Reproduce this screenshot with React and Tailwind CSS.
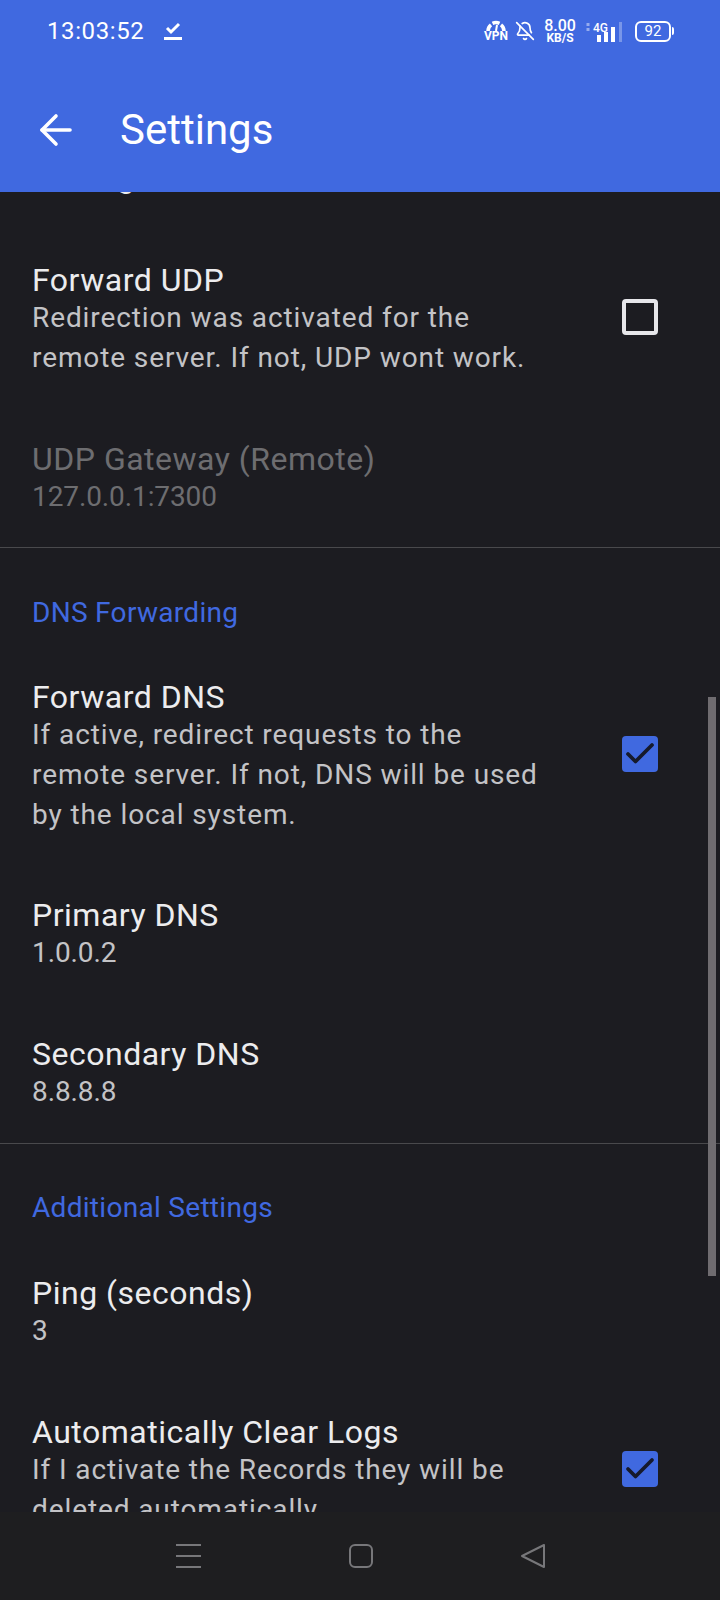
import { ArrowLeft, BellOff, Check } from 'lucide-react';

const FONT = "font-['Roboto',sans-serif]";

function Box({ on }) {
  if (on) {
    return (
      <div className="w-9 h-9 mb-[7px] rounded bg-[#4069e0] flex items-center justify-center shrink-0">
        <Check size={36} strokeWidth={2.5} className="text-[#161a2c]" />
      </div>
    );
  }
  return <div className="w-9 h-9 mb-[7px] rounded border-4 border-[#e6e6ea] shrink-0" />;
}

function Row({ title, sub, on, dim, num, className = '' }) {
  return (
    <div className={`flex items-center pl-8 pr-[62px] ${className}`}>
      <div className="flex-1 min-w-0">
        <div className={`text-[32px] leading-[36px] tracking-[0.5px] ${dim ? 'text-[#6d6d70]' : 'text-[#ececee]'}`}>{title}</div>
        <div className={`text-[28px] leading-[40px] ${num ? 'tracking-[-0.1px]' : 'tracking-[0.9px]'} ${dim ? 'text-[#6d6d70]' : 'text-[#c3c3c6]'}`}>{sub}</div>
      </div>
      {on !== undefined && <Box on={on} />}
    </div>
  );
}

function Section({ children, className = '' }) {
  return <div className={`pl-8 text-[28px] leading-[36px] tracking-[0.3px] text-[#4069e0] ${className}`}>{children}</div>;
}

function StatusIcons() {
  return (
    <div className="flex items-center text-white">
      <div className="w-[22px] flex flex-col items-center">
        <svg width="20" height="11" viewBox="0 0 20 11" fill="none" stroke="currentColor" strokeWidth="3.5">
          <path d="M2 11a8 8 0 0 1 3-6.2" />
          <path d="M6.5 3.4a8 8 0 0 1 7 0" />
          <path d="M15 4.8a8 8 0 0 1 3 6.2" />
          <path d="M11 5l-1 6" strokeWidth="2" />
        </svg>
        <span className="text-[12px] leading-[11px] font-bold">VPN</span>
      </div>
      <BellOff className="ml-2" size={20} strokeWidth={2} />
      <div className="ml-[7px] w-9 flex flex-col items-center">
        <span className="text-[16px] leading-[13px] font-medium">8.00</span>
        <span className="text-[12px] leading-[12px] font-bold">KB/S</span>
      </div>
      <div className="relative ml-[7px] w-[38px] h-6">
        <span className="absolute left-2 top-[3px] text-[12px] leading-[13px] font-medium">4G</span>
        <svg className="absolute left-0 top-0" width="38" height="24" viewBox="0 0 38 24">
          <path d="M3 4v3M3 9v3" stroke="#ffffff" strokeOpacity="0.45" strokeWidth="3" />
          <rect x="12" y="16" width="4" height="7" fill="currentColor" />
          <rect x="19" y="13" width="4" height="10" fill="currentColor" />
          <rect x="26" y="8" width="4" height="15" fill="currentColor" />
          <rect x="34" y="3" width="3" height="20" fill="#ffffff" fillOpacity="0.3" />
        </svg>
      </div>
      <div className="ml-3 w-9 h-[21px] rounded-[6px] border-2 border-white flex items-center justify-center text-[15px] leading-none">92</div>
      <div className="w-[2px] h-2 bg-white rounded-r ml-px" />
    </div>
  );
}

export default function App() {
  return (
    <div className={`w-[720px] h-[1600px] flex flex-col bg-[#1c1c21] overflow-hidden ${FONT}`}>
      <div className="h-[192px] shrink-0 bg-[#4069e0] text-white z-10">
        <div className="h-[62px] pl-[47px] pr-[46px] flex items-center justify-between">
          <div className="flex items-center">
            <span className="text-[24px] leading-none tracking-[0.6px]">13:03:52</span>
            <svg className="ml-[20px]" width="18" height="20" viewBox="0 0 18 20" fill="none" stroke="currentColor" strokeWidth="3">
              <path d="M3 7l4 4 8-8" />
              <path d="M0 17.5h18" />
            </svg>
          </div>
          <StatusIcons />
        </div>
        <div className="h-[130px] pt-[5px] flex items-center pl-8">
          <ArrowLeft size={48} strokeWidth={1.8} />
          <span className="ml-10 text-[42px] leading-none">Settings</span>
        </div>
      </div>

      <div className="relative flex-1 min-h-0 overflow-hidden">
        <div className="-mt-[35px]">
          <div className="pl-8 text-[32px] leading-[40px] tracking-[0.5px] text-[#ececee]">Settings</div>
          <Row className="mt-[65px]" title="Forward UDP" sub={<>Redirection was activated for the<br />remote server. If not, UDP wont work.</>} on={false} />
          <Row className="mt-[63px]" dim num title="UDP Gateway (Remote)" sub="127.0.0.1:7300" />
          <div className="mt-[30px] h-px bg-[#49494c]" />
          <Section className="mt-[47px]">DNS Forwarding</Section>
          <Row className="mt-[48px]" title="Forward DNS" sub={<>If active, redirect requests to the<br />remote server. If not, DNS will be used<br />by the local system.</>} on />
          <Row className="mt-[62px]" num title="Primary DNS" sub="1.0.0.2" />
          <Row className="mt-[63px]" num title="Secondary DNS" sub="8.8.8.8" />
          <div className="mt-[31px] h-px bg-[#49494c]" />
          <Section className="mt-[46px]">Additional Settings</Section>
          <Row className="mt-[49px]" num title="Ping (seconds)" sub="3" />
          <Row className="mt-[63px]" title="Automatically Clear Logs" sub={<>If I activate the Records they will be<br />deleted automatically.</>} on />
        </div>
        <div className="absolute left-[708px] top-[505px] w-2 h-[579px] bg-[#6f6c70]" />
      </div>

      <div className="h-[88px] shrink-0 bg-[#1e1e20] flex items-start justify-center pt-[32px] gap-[148px] text-[#77777a] z-10">
        <svg width="25" height="24" viewBox="0 0 25 24" stroke="currentColor" strokeWidth="2">
          <path d="M0 1h25M0 12h25M0 23h25" />
        </svg>
        <svg width="24" height="24" viewBox="0 0 24 24" fill="none" stroke="currentColor" strokeWidth="2">
          <rect x="1" y="1" width="22" height="22" rx="5" />
        </svg>
        <svg width="24" height="24" viewBox="0 0 24 24" fill="none" stroke="currentColor" strokeWidth="2" strokeLinejoin="round">
          <path d="M23 1v22L1 12z" />
        </svg>
      </div>
    </div>
  );
}
